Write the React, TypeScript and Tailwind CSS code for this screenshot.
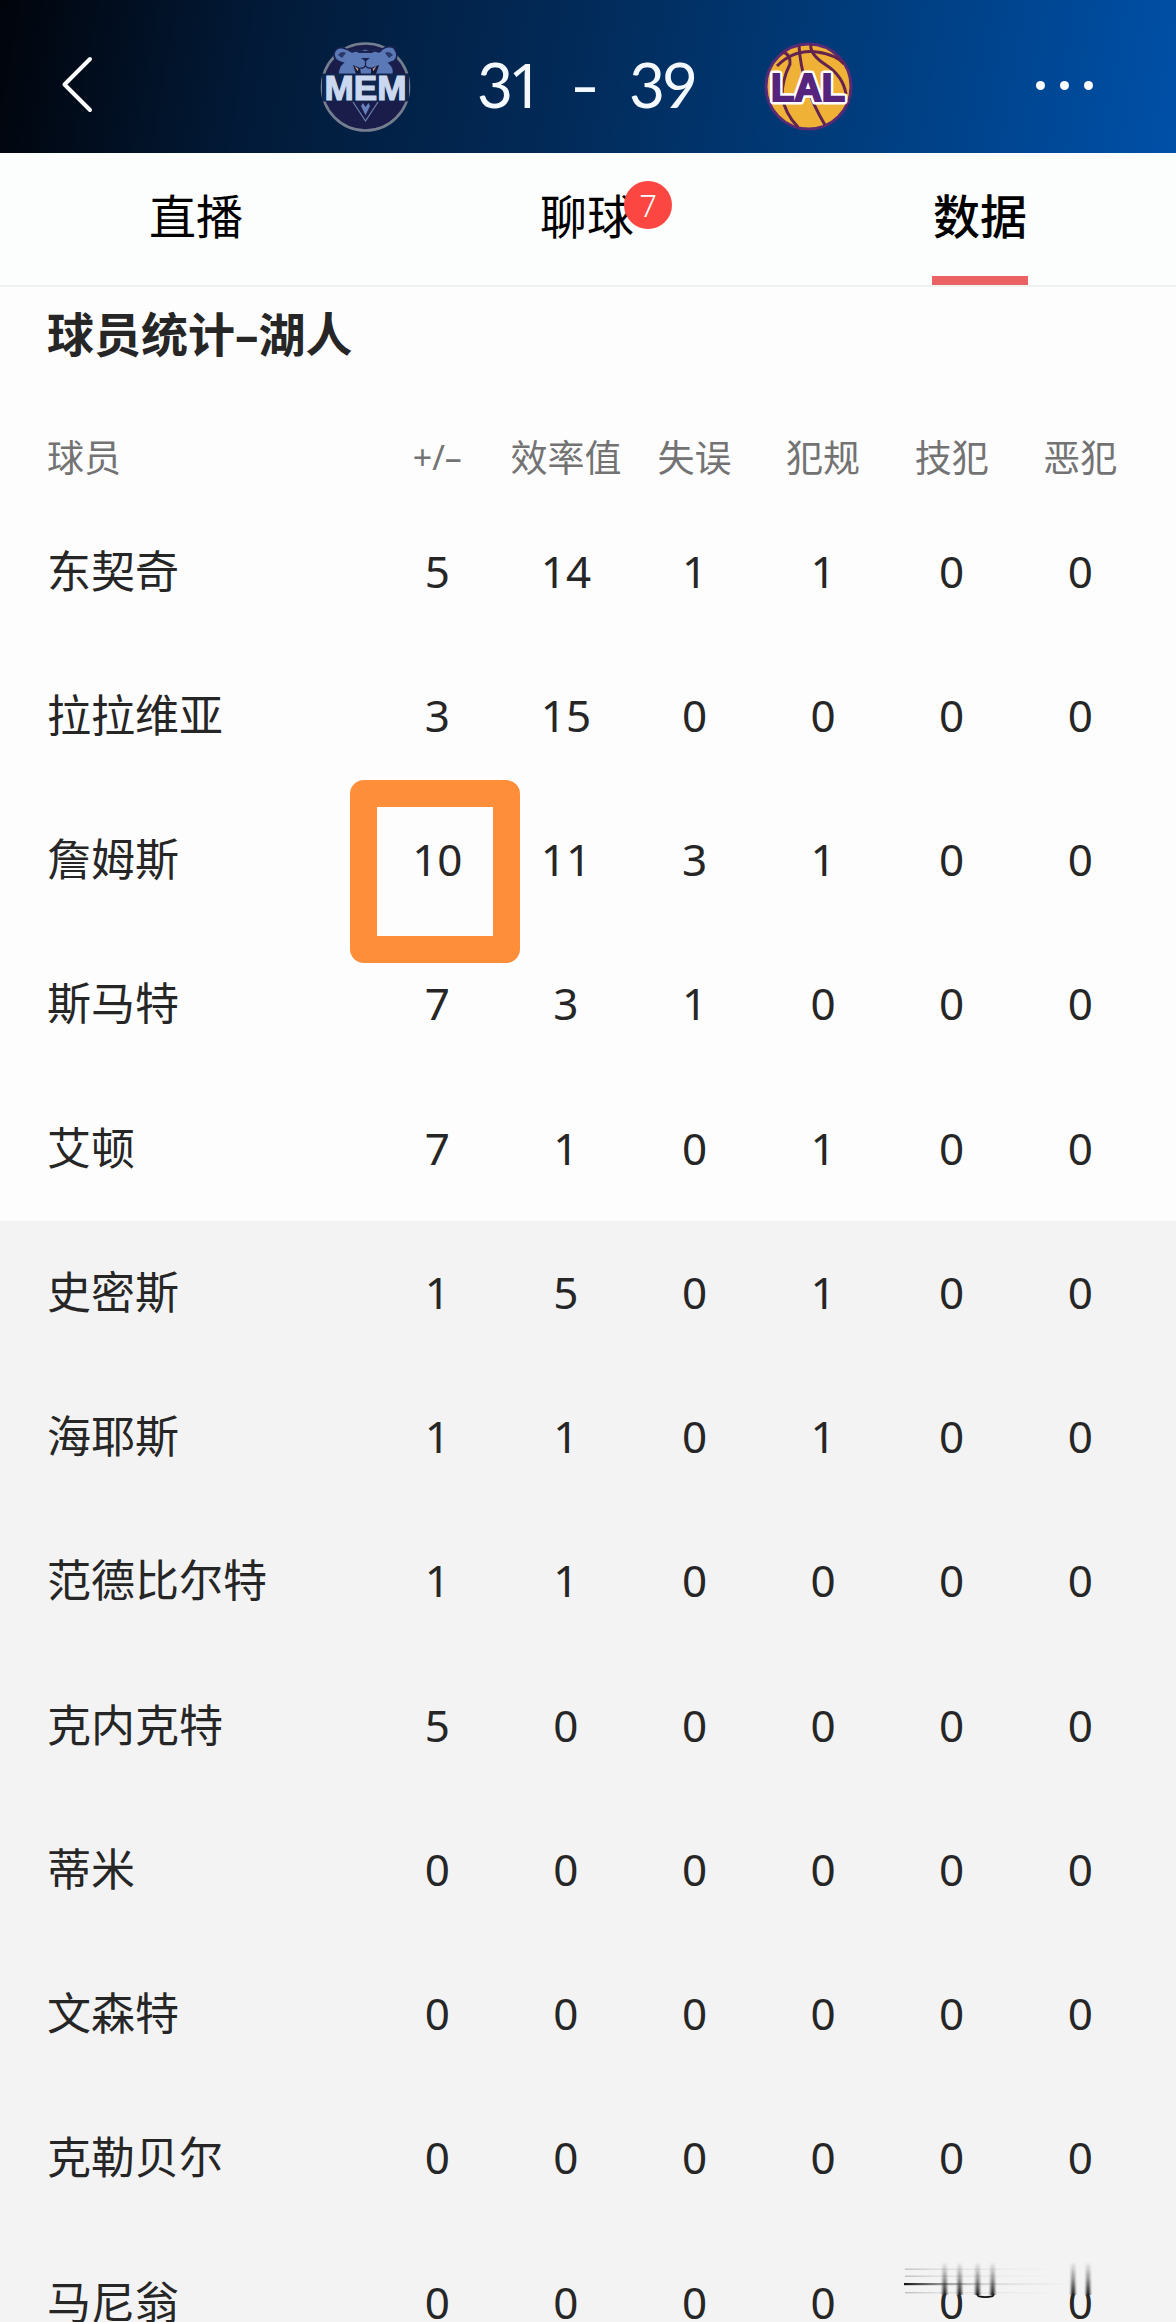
const players: [string, number[]][] = [
  ['东契奇', [5, 14, 1, 1, 0, 0]],
  ['拉拉维亚', [3, 15, 0, 0, 0, 0]],
  ['詹姆斯', [10, 11, 3, 1, 0, 0]],
  ['斯马特', [7, 3, 1, 0, 0, 0]],
  ['艾顿', [7, 1, 0, 1, 0, 0]],
  ['史密斯', [1, 5, 0, 1, 0, 0]],
  ['海耶斯', [1, 1, 0, 1, 0, 0]],
  ['范德比尔特', [1, 1, 0, 0, 0, 0]],
  ['克内克特', [5, 0, 0, 0, 0, 0]],
  ['蒂米', [0, 0, 0, 0, 0, 0]],
  ['文森特', [0, 0, 0, 0, 0, 0]],
  ['克勒贝尔', [0, 0, 0, 0, 0, 0]],
  ['马尼翁', [0, 0, 0, 0, 0, 0]],
];
const columns = ['+/–', '效率值', '失误', '犯规', '技犯', '恶犯'];
const STARTERS = 5;

function Grizzlies() {
  return (
    <svg viewBox="0 0 120 110" className="h-[110px] w-[120px]">
      <circle cx="55.5" cy="57" r="43.5" fill="#1a1d4a" stroke="#747e8f" strokeWidth="2.6" />
      <path d="M28 45 Q28 37 33 33 Q23 31 24 23 Q27 15 36 19 Q40 20 42 22 Q55 16 69 22 Q77 14 84 18 Q90 26 84 31 L79 33 Q85 38 83 45 Z" fill="#5b79b7" stroke="#182150" strokeWidth="1.600" />
      <path d="M28 25 Q31 20 36 23 L32 28 Z M83 25 Q79 20 75 23 L79 28 Z" fill="#2c3868" />
      <path d="M39 22 Q43 16 50 19.500 L55 21 L61 19.500 Q68 16 72 22 Q65 20 62 23 L49 23 Q45 20 39 22 Z" fill="#1b2350" />
      <path d="M51 28 h9 l-4.500 3.500 z" fill="#1b2350" />
      <path d="M55.500 31 v5 M50 38 q3 1 5.500 -2 q2.500 3 6 2" fill="none" stroke="#1b2350" strokeWidth="1.300" />
      <path d="M43 35 l7 3 1 6 h-5 z M69 35 l-8 3 0 6 h5 z" fill="#161b3c" />
      <path d="M44.500 36 l4 3 -1 2 z M66.500 36 l-4 3 1 2 z" fill="#c9a58d" />
      <rect x="12" y="43.500" width="87" height="28" fill="#10264f" />
      <path d="M43 72 L55.500 91 L68 72" fill="none" stroke="#6b83b2" strokeWidth="1.200" />
      <path d="M51 76 L53 73 L55.500 77 L58.500 73 L60 76 L55.500 85 Z" fill="#6681bd" />
      <text x="55.500" y="69.500" textAnchor="middle" textLength="82" lengthAdjust="spacingAndGlyphs" fill="#cbd8ef" fontFamily="Liberation Sans" fontWeight="700" fontSize="35" stroke="#cbd8ef" strokeWidth="1.200">MEM</text>
    </svg>
  );
}

function Lakers() {
  return (
    <svg viewBox="0 0 120 110" className="h-[110px] w-[120px]">
      <circle cx="59.500" cy="56.500" r="42.500" fill="#efb136" stroke="#5b2a75" strokeWidth="3" />
      <g fill="none" stroke="#62244f" strokeWidth="3">
        <path d="M28 36 Q45 19 68 22 Q88 25 95 34" />
        <path d="M34 22 Q42 25 41 34 Q33 50 33 66 Q36 84 49 97" />
        <path d="M50 15 Q52 55 76 95" />
        <path d="M62 14 Q60 24 77 35 Q94 46 97 64" />
      </g>
      <text x="59" y="71" textAnchor="middle" textLength="74" lengthAdjust="spacingAndGlyphs" fill="#fff" fontFamily="Liberation Sans" fontWeight="700" fontSize="38" stroke="#fff" strokeWidth="7" strokeLinejoin="round" paintOrder="stroke">LAL</text>
      <text x="59" y="71" textAnchor="middle" textLength="74" lengthAdjust="spacingAndGlyphs" fill="#55257d" fontFamily="Liberation Sans" fontWeight="700" fontSize="38" stroke="#55257d" strokeWidth="2">LAL</text>
    </svg>
  );
}

/* Faded strip over the bottom-right corner of the table. */
function CornerSmudge() {
  return (
    <svg viewBox="0 0 296 82" className="absolute bottom-0 right-0 h-[82px] w-[296px]">
      <defs>
        <linearGradient id="drop" x1="0" y1="0" x2="0" y2="1">
          <stop offset="0" stopColor="#222" stopOpacity="0" />
          <stop offset=".5" stopColor="#222" stopOpacity=".45" />
          <stop offset="1" stopColor="#111" />
        </linearGradient>
        <linearGradient id="trail">
          <stop offset="0" stopColor="#111" />
          <stop offset=".25" stopColor="#666" stopOpacity=".6" />
          <stop offset=".5" stopColor="#aaa" stopOpacity=".35" />
          <stop offset="1" stopColor="#ccc" stopOpacity="0" />
        </linearGradient>
        <linearGradient id="faint">
          <stop offset="0" stopColor="#888" stopOpacity=".5" />
          <stop offset=".2" stopColor="#bbb" stopOpacity=".4" />
          <stop offset="1" stopColor="#ccc" stopOpacity="0" />
        </linearGradient>
        <filter id="soft" x="-1" width="3" y="-.1" height="1.2">
          <feGaussianBlur stdDeviation="1 0" />
        </filter>
      </defs>
      <rect x="25" y="22" width="250" height="33" fill="#f3f3f3" />
      <rect x="25" y="28.500" width="160" height="1.400" fill="url(#faint)" />
      <rect x="25" y="35.500" width="160" height="1.400" fill="url(#faint)" />
      <rect x="24" y="43" width="170" height="2.200" fill="url(#trail)" />
      <rect x="25" y="52" width="160" height="1.400" fill="url(#faint)" />
      {[62.500, 77.500, 95.500, 110.500, 191, 206].map((x) => (
        <rect key={x} x={x} y="22" width="4.200" height="33" fill="url(#drop)" filter="url(#soft)" />
      ))}
      <path d="M96 54.500 Q105 58 115 54.500 L113 57 Q105 59 98 57 Z" fill="#111" />
    </svg>
  );
}

export default function App() {
  return (
    <div className="relative flex h-[2322px] w-[1176px] flex-col overflow-hidden bg-[#fdfdfd] font-['Noto_Sans','Noto_Sans_CJK_SC',sans-serif] text-[#262626]">
      <header className="flex h-[153px] shrink-0 items-center bg-[linear-gradient(100deg,#01040b_0%,#021a38_22%,#022a58_48%,#003c7c_72%,#0050a8_100%)] pt-[17px] text-white">
        <svg viewBox="0 0 100 90" className="ml-[30px] h-[90px] w-[100px] shrink-0">
          <path d="M60 19 L34.500 44.500 L60 70" fill="none" stroke="white" strokeWidth="4" strokeLinecap="round" strokeLinejoin="round" />
        </svg>
        <div className="ml-[180px] h-[110px] w-[120px]"><Grizzlies /></div>
        <div className="flex w-[320px] items-baseline pb-[3px] pl-[47px] font-['Lato',sans-serif] text-[62px] leading-none text-[#f3f9ff]">
          <span className="w-[93px] tracking-[-5px]">3<span className="font-['Noto_Sans',sans-serif]">1</span></span>
          <span className="w-[59px]"><span className="inline-block origin-left scale-x-[1.3]">-</span></span>
          <span className="tracking-[-3px]">39</span>
        </div>
        <div className="-ml-px h-[110px] w-[120px]"><Lakers /></div>
        <div className="ml-[167px] flex gap-[15px]">
          {[0, 1, 2].map((i) => <span key={i} className="size-[9px] rounded-full bg-white" />)}
        </div>
      </header>

      <nav className="grid h-[134px] shrink-0 grid-cols-3 border-b-2 border-[#f0f1f1] bg-[#fcfdfd] text-[47px] leading-none text-black">
        <div className="flex justify-center pt-[40px]">直播</div>
        <div className="flex justify-center pr-[2px] pt-[40px]">
          <span className="relative">
            聊球
            <span className="absolute -top-[12px] left-[84px] flex size-12 items-center justify-center rounded-full bg-[#fb4642] text-[31px] font-light text-white">7</span>
          </span>
        </div>
        <div className="flex flex-col items-center justify-between pt-[40px] font-medium">
          <span>数据</span>
          <span className="h-[9px] w-24 bg-[#eb6264]" />
        </div>
      </nav>

      <h1 className="flex h-[96px] shrink-0 items-center pb-[2px] pl-[47px] text-[47px] font-bold">球员统计–湖人</h1>

      <div className="grid h-[115px] shrink-0 grid-cols-[326px_repeat(6,128.6px)] items-center pl-[47px] pt-[34px] text-[37px] text-[#737373]">
        <span>球员</span>
        {columns.map((c, i) => (
          <span key={c} className={`whitespace-nowrap text-center ${i === 0 ? 'text-[34px]' : ''}`}>{c}</span>
        ))}
      </div>

      <main className="pt-[2px]">
        {players.map(([name, stats], row) => (
          <div
            key={name}
            className={`grid h-[144.25px] grid-cols-[326px_repeat(6,128.6px)] items-center pb-[3px] pl-[47px] text-[44px] ${row < STARTERS ? 'bg-[#fdfdfd]' : 'bg-[#f3f3f3]'}`}
          >
            <span className="whitespace-nowrap">{name}</span>
            {stats.map((value, i) => (
              <span key={columns[i]} className="relative text-center">
                {value}
                {row === 2 && i === 0 && (
                  <span className="absolute -left-[23px] -top-[46px] h-[183px] w-[170px] rounded-[14px] border-[27px] border-[#ff8e3b]" />
                )}
              </span>
            ))}
          </div>
        ))}
      </main>
      <CornerSmudge />
    </div>
  );
}
